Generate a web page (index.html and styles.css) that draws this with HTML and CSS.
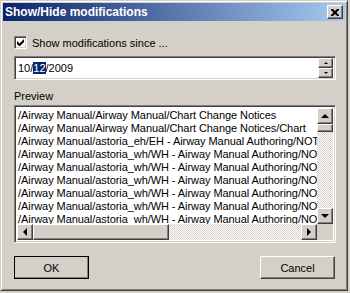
FILE: index.html
```html
<!DOCTYPE html>
<html lang="en">
<head>
    <meta charset="UTF-8">
    <title>Show/Hide modifications</title>
    <link rel="stylesheet" href="styles.css">
</head>
<body>
<div class="window">
    <div class="titlebar">
        <span class="title">Show/Hide modifications</span>
        <span class="close-btn">
            <svg width="8" height="7" viewBox="0 0 8 7"><path d="M0 0h2l2 2 2-2h2v1l-2.5 2.5L8 6v1H6L4 5 2 7H0V6l2.5-2.5L0 1z" fill="#000"/></svg>
        </span>
    </div>

    <div class="content">
        <label class="check-row">
            <span class="checkbox">
                <svg width="7" height="7" viewBox="0 0 7 7"><path d="M0 2v3l2 2h1l4-4V0L2.5 4.5z" fill="#000"/></svg>
            </span>
            Show modifications since ...
        </label>

        <div class="date-field">
            <span class="date-text">10/<span class="sel">12</span>/2009</span>
            <div class="spin">
                <span class="spin-btn"><i class="arrow-up small"></i></span>
                <span class="spin-btn"><i class="arrow-down small"></i></span>
            </div>
        </div>

        <div class="section-label">Preview</div>

        <div class="listbox">
            <div class="list-main">
                <div class="rows">
                    <div class="row">/Airway Manual/Airway Manual/Chart Change Notices</div>
                    <div class="row">/Airway Manual/Airway Manual/Chart Change Notices/Chart</div>
                    <div class="row">/Airway Manual/astoria_eh/EH - Airway Manual Authoring/NOT</div>
                    <div class="row">/Airway Manual/astoria_wh/WH - Airway Manual Authoring/NO</div>
                    <div class="row">/Airway Manual/astoria_wh/WH - Airway Manual Authoring/NO</div>
                    <div class="row">/Airway Manual/astoria_wh/WH - Airway Manual Authoring/NO</div>
                    <div class="row">/Airway Manual/astoria_wh/WH - Airway Manual Authoring/NO</div>
                    <div class="row">/Airway Manual/astoria_wh/WH - Airway Manual Authoring/NO</div>
                    <div class="row">/Airway Manual/astoria_wh/WH - Airway Manual Authoring/NO</div>
                    <div class="row">/Airway Manual/astoria_wh/WH - Airway Manual Authoring/NO</div>
                </div>
                <div class="vscroll">
                    <span class="sb-btn"><i class="arrow-up"></i></span>
                    <span class="sb-thumb v"></span>
                    <span class="sb-track"></span>
                    <span class="sb-btn"><i class="arrow-down"></i></span>
                </div>
            </div>
            <div class="hscroll">
                <span class="sb-btn"><i class="arrow-left"></i></span>
                <span class="sb-thumb h"></span>
                <span class="sb-track"></span>
                <span class="sb-btn"><i class="arrow-right"></i></span>
                <span class="corner"></span>
            </div>
        </div>

        <div class="buttons">
            <button class="default">OK</button>
            <button>Cancel</button>
        </div>
    </div>
</div>
</body>
</html>
```

FILE: styles.css
```css
body {
    margin: 0;
    background: #d4d0c8;
    font-family: "Liberation Sans", Arial, sans-serif;
    font-size: 11px;
    color: #000;
}
.window {
    width: 348px;
    height: 291px;
    box-sizing: border-box;
    background: #d4d0c8;
    border: 1px solid;
    border-color: #d4d0c8 #404040 #404040 #d4d0c8;
    box-shadow: inset 1px 1px #fff, inset -1px -1px #808080;
    padding: 2px;
}
.titlebar {
    height: 18px;
    display: flex;
    align-items: center;
    justify-content: space-between;
    background: linear-gradient(to right, #0a246a, #a6caf0);
    padding: 0 2px;
}
.title {
    color: #fff;
    font-weight: bold;
    font-size: 12px;
}
/* raised 3d look, reused by buttons */
.close-btn,
.spin-btn,
.sb-btn,
.sb-thumb,
button {
    background: #d4d0c8;
    box-sizing: border-box;
    border: 1px solid;
    border-color: #fff #404040 #404040 #fff;
    box-shadow: inset -1px -1px #808080;
}
.close-btn {
    width: 16px;
    height: 14px;
    display: flex;
    align-items: center;
    justify-content: center;
}
.content {
    padding: 15px 9px 0 11px;
}
.check-row {
    display: flex;
    align-items: center;
    gap: 5px;
    height: 13px;
}
.checkbox,
.date-field,
.listbox {
    box-sizing: border-box;
    background: #fff;
    border: 1px solid;
    border-color: #808080 #fff #fff #808080;
    box-shadow: inset 1px 1px #404040, inset -1px -1px #d4d0c8;
}
.checkbox {
    width: 13px;
    height: 13px;
    display: flex;
    align-items: center;
    justify-content: center;
}
.date-field {
    margin-top: 7px;
    height: 24px;
    display: flex;
    align-items: center;
    justify-content: space-between;
    padding: 2px;
}
.date-text {
    padding-left: 1px;
}
.sel {
    background: #0a246a;
    color: #fff;
}
.spin {
    display: flex;
    flex-direction: column;
    width: 15px;
    height: 20px;
}
.spin-btn {
    flex: 1;
    display: flex;
    align-items: center;
    justify-content: center;
}
.section-label {
    margin-top: 10px;
    height: 15px;
}
.listbox {
    height: 138px;
    padding: 2px;
    display: flex;
    flex-direction: column;
}
.list-main {
    flex: 1;
    display: flex;
    overflow: hidden;
}
.rows {
    flex: 1;
    overflow: hidden;
    padding: 1px 0 0 1px;
}
.row {
    height: 13px;
    line-height: 13px;
    white-space: nowrap;
    letter-spacing: -0.07px;
}
.vscroll {
    width: 16px;
    display: flex;
    flex-direction: column;
}
.hscroll {
    height: 16px;
    display: flex;
}
.sb-btn {
    width: 16px;
    height: 16px;
    flex: none;
    display: flex;
    align-items: center;
    justify-content: center;
}
.sb-thumb.v {
    height: 8px;
}
.sb-thumb.h {
    width: 136px;
}
.sb-track {
    flex: 1;
    background: repeating-conic-gradient(#d4d0c8 0 25%, #fff 0 50%) 0 0 / 2px 2px;
}
.corner {
    width: 16px;
    background: #d4d0c8;
}
.arrow-up, .arrow-down, .arrow-left, .arrow-right {
    width: 0;
    height: 0;
    border: 4px solid transparent;
}
.arrow-up { border-bottom-color: #000; border-top-width: 0; }
.arrow-down { border-top-color: #000; border-bottom-width: 0; }
.arrow-left { border-right-color: #000; border-left-width: 0; }
.arrow-right { border-left-color: #000; border-right-width: 0; }
.arrow-up.small { border-width: 0 2px 2px; }
.arrow-down.small { border-width: 2px 2px 0; }
.buttons {
    display: flex;
    justify-content: space-between;
    margin-top: 13px;
    padding-right: 1px;
}
button {
    width: 75px;
    height: 23px;
    font-family: inherit;
    font-size: 11px;
    color: #000;
    padding: 0;
}
button.default {
    outline: 1px solid #000;
    outline-offset: -1px;
    border-color: #fff #404040 #404040 #fff;
}
```
